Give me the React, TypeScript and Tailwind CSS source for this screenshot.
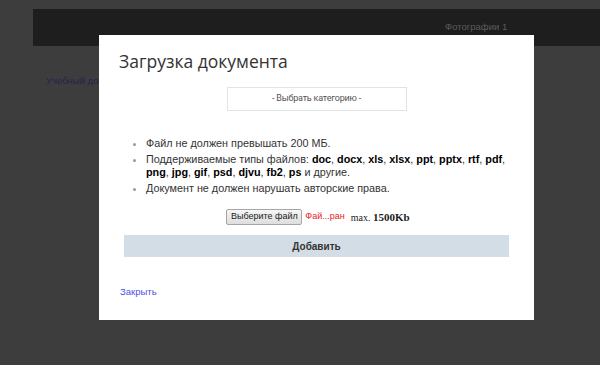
import React from 'react';

const formats = ['doc', 'docx', 'xls', 'xlsx', 'ppt', 'pptx', 'rtf', 'pdf', 'png', 'jpg', 'gif', 'psd', 'djvu', 'fb2', 'ps'];

function UploadModal() {
  return (
    <div className="absolute left-[99px] top-[35px] w-[435px] h-[285px] bg-white flex flex-col">
      <h2 className="pl-5 pt-[14px] text-[17.5px] leading-[24px] text-[#333] font-['Open_Sans',sans-serif] font-normal">
        Загрузка документа
      </h2>

      <div className="mt-[14px] mx-auto w-[180px] h-[24px] border border-[#dfe4ea] flex items-center justify-center text-[9px] text-[#555] font-['Roboto',sans-serif] tracking-[-0.2px]">
        - Выбрать категорию -
      </div>

      <div className="mx-[25px] mt-[26px]">
        <ul className="list-disc pl-[22px] text-[10.8px] leading-[13px] text-[#333] font-['Liberation_Sans',Arial,sans-serif] marker:text-[#8e9ab3] space-y-[3px]">
          <li>Файл не должен превышать 200 МБ.</li>
          <li>
            Поддерживаемые типы файлов:{' '}
            {formats.map((f, i) => (
              <React.Fragment key={f}>
                <b className="text-black">{f}</b>
                {i < formats.length - 1 ? ', ' : ' '}
              </React.Fragment>
            ))}
            и другие.
          </li>
          <li>Документ не должен нарушать авторские права.</li>
        </ul>

        <div className="mt-[14px] h-[16px] flex items-center justify-center pl-[3px] font-['Liberation_Sans',Arial,sans-serif]">
          <span className="h-[16px] w-[76px] flex items-center justify-center border border-[#a6a6a6] rounded-[2px] bg-gradient-to-b from-[#f6f6f6] to-[#dedede] text-[9px] text-[#222]">
            Выберите файл
          </span>
          <span className="ml-[3px] text-[9px] text-[#e8211d]">Фай...ран</span>
          <span className="ml-[6px] text-[10px] text-[#222] font-['Liberation_Serif','Times_New_Roman',serif]">
            max. <b className="text-[11px]">1500Kb</b>
          </span>
        </div>

        <button className="mt-[10px] w-full h-[22px] bg-[#d3dde6] text-[10px] font-bold text-[#333] font-['Liberation_Sans',Arial,sans-serif]">
          Добавить
        </button>
      </div>

      <a className="mt-[28px] ml-[21px] text-[9.5px] leading-[13px] text-[#4f4fe6] font-['Liberation_Sans',Arial,sans-serif] cursor-pointer">
        Закрыть
      </a>
    </div>
  );
}

export default function App() {
  return (
    <div className="relative w-[600px] h-[365px] overflow-hidden bg-[#3d3d3d] font-['Liberation_Sans',Arial,sans-serif]">
      <div className="pt-[9px] pl-[33px]">
        <div className="h-[37px] bg-[#1e1e1e] flex items-center pl-[412px] text-[9.5px] text-[#5b5b5b]">
          Фотографии 1
        </div>
        <div className="mt-[28px] pl-[13px] text-[9.5px] text-[#23234d] whitespace-nowrap">
          Учебный документ
        </div>
      </div>
      <UploadModal />
    </div>
  );
}
